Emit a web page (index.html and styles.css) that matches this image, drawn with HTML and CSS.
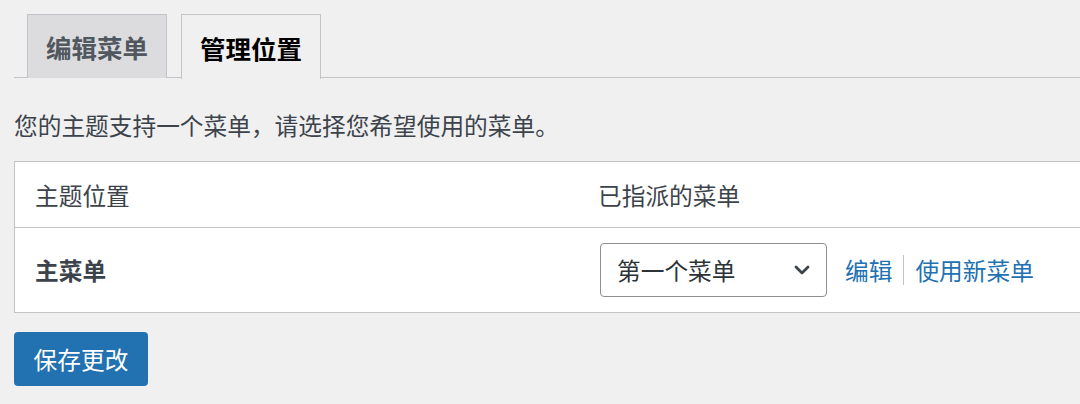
FILE: index.html
```html
<!DOCTYPE html>
<html lang="zh-CN">
<head>
  <meta charset="UTF-8" />
  <meta name="viewport" content="width=device-width, initial-scale=1.0"/>
  <title>菜单 - 管理位置</title>
  <link rel="stylesheet" href="styles.css">
</head>
<body>
  <nav class="tabs">
    <a href="#" class="tab">编辑菜单</a>
    <a href="#" class="tab active">管理位置</a>
  </nav>

  <p class="desc">您的主题支持一个菜单，请选择您希望使用的菜单。</p>

  <div class="locations">
    <div class="row head">
      <div class="cell">主题位置</div>
      <div class="cell">已指派的菜单</div>
    </div>
    <div class="row">
      <div class="cell name">主菜单</div>
      <div class="cell assign">
        <div class="select">
          <span>第一个菜单</span>
          <svg width="20" height="20" viewBox="0 0 20 20"><path d="M4 7l6 6 6-6" fill="none" stroke="#3c434a" stroke-width="2.8" stroke-linecap="round" stroke-linejoin="round"/></svg>
        </div>
        <a href="#" class="link">编辑</a>
        <span class="sep"></span>
        <a href="#" class="link">使用新菜单</a>
      </div>
    </div>
  </div>

  <button class="save">保存更改</button>
</body>
</html>
```

FILE: styles.css
```css
* { box-sizing: border-box; margin: 0; padding: 0; }
body {
  background: #f0f0f1;
  color: #3c434a;
  font-family: "Noto Sans CJK SC", "Noto Sans", sans-serif;
  font-size: 23.7px;
  padding: 14px 0 0 14px;
  overflow: hidden;
}
.tabs {
  display: flex;
  gap: 14px;
  padding-left: 13px;
  border-bottom: 1px solid #c3c4c7;
  height: 64px;
}
.tab {
  display: flex;
  align-items: center;
  padding: 0 18px;
  height: 64px;
  font-size: 25.5px;
  font-weight: bold;
  color: #50575e;
  text-decoration: none;
  background: #dcdcde;
  border: 1px solid #c3c4c7;
  border-bottom: none;
}
.tab.active {
  background: #f0f0f1;
  color: #000;
  height: 65px;
  padding: 0 18px;
}
.desc {
  margin-top: 33px;
  line-height: 28px;
  color: #3c434a;
}
.locations {
  margin-top: 22px;
  width: 1100px;
  background: #fff;
  border: 1px solid #c3c4c7;
}
.row {
  display: grid;
  grid-template-columns: 563px auto;
  align-items: center;
  height: 84px;
}
.row.head {
  height: 66px;
  border-bottom: 1px solid #c3c4c7;
}
.cell { padding-left: 20px; line-height: 28px; }
.name { font-weight: bold; }
.assign {
  display: flex;
  align-items: center;
  padding-left: 22px;
}
.select {
  display: flex;
  align-items: center;
  justify-content: space-between;
  width: 227px;
  height: 54px;
  padding: 0 14px 0 16px;
  border: 1px solid #8c8f94;
  border-radius: 4px;
  color: #2c3338;
}
.link {
  color: #2271b1;
  text-decoration: none;
}
.select + .link { margin-left: 18px; }
.sep {
  width: 1px;
  height: 30px;
  background: #c3c4c7;
  margin: 0 11px;
}
.save {
  margin-top: 19px;
  width: 134px;
  height: 54px;
  background: #2271b1;
  color: #fff;
  border: none;
  border-radius: 4px;
  font-family: inherit;
  font-size: 23.7px;
}
```
